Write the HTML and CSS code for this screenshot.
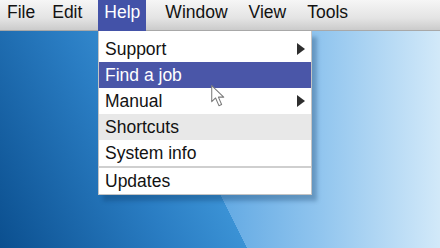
FILE: index.html
```html
<!DOCTYPE html>
<html lang="en">
<head>
  <meta charset="UTF-8" />
  <title>Help menu</title>
  <link rel="stylesheet" href="styles.css">
</head>
<body>
  <header class="menubar">
    <span class="menu-title first">File</span>
    <span class="menu-title">Edit</span>
    <span class="menu-title active">Help</span>
    <span class="menu-title">Window</span>
    <span class="menu-title">View</span>
    <span class="menu-title">Tools</span>
  </header>

  <main class="desktop">
    <ul class="dropdown">
      <li class="item has-sub">Support <span class="arrow"></span></li>
      <li class="item selected">Find a job</li>
      <li class="item has-sub">Manual <span class="arrow"></span></li>
      <li class="item hovered">Shortcuts</li>
      <li class="item">System info</li>
      <li class="separator"></li>
      <li class="item">Updates</li>
    </ul>
  </main>

  <!-- mouse pointer over the menu -->
  <svg class="cursor" viewBox="0 0 16 24" width="17" height="25" xmlns="http://www.w3.org/2000/svg">
    <path d="M1.5 1.5 L1.5 17 L5.2 13.4 L8.4 20.8 L11 19.7 L7.9 12.6 L13 12.6 Z" fill="#ffffff" stroke="#7a7a7a" stroke-width="1" stroke-linejoin="round"/>
  </svg>
</body>
</html>
```

FILE: styles.css
```css
:root {
  --highlight: #4352a8;
  --text: #121212;
  --font: 'Liberation Sans', Arial, sans-serif;
}

* {
  box-sizing: border-box;
  margin: 0;
  padding: 0;
}

html, body {
  width: 440px;
  height: 248px;
  overflow: hidden;
}

body {
  position: relative;
  font-family: var(--font);
  font-size: 17.5px;
  color: var(--text);
  background:
    linear-gradient(63.4deg, #0b4f8f 0%, #2a7dc3 30%, #3b92d5 43.8%, transparent 43.8%),
    linear-gradient(90deg, #5aa2de 0%, #62a9e3 50%, #8fc4ee 72%, #d2e9f9 100%);
}

.menubar {
  display: flex;
  gap: 9px;
  height: 31px;
  padding-left: 1px;
  background: linear-gradient(#f6f6f6, #e4e4e4 60%, #cbcbcb);
  border-bottom: 1px solid #a8a8a8;
}

.menu-title {
  padding: 0 6px;
  height: 31px;
  line-height: 25px;
}

.menu-title.first {
  margin-right: -4px;
}

.menu-title.active {
  margin: 0 4px 0 1px;
  background: var(--highlight);
  color: #ffffff;
}

.desktop {
  padding-left: 98px;
}

.dropdown {
  list-style: none;
  width: 214px;
  padding-top: 5px;
  background: #ffffff;
  border: 1px solid #c4c4c4;
  border-top: none;
  box-shadow: 5px 6px 4px rgba(10, 50, 90, 0.3);
}

.item {
  display: flex;
  align-items: center;
  justify-content: space-between;
  height: 26px;
  line-height: 26px;
  padding: 0 6px 0 6px;
}

.item.selected {
  background: #4a56a8;
  color: #ffffff;
}

.item.hovered {
  background: #e8e8e8;
}

.arrow {
  width: 0;
  height: 0;
  border-left: 8px solid #2e2e2e;
  border-top: 6px solid transparent;
  border-bottom: 6px solid transparent;
}

.separator {
  height: 2px;
  background: #cfcfcf;
}

.cursor {
  position: absolute;
  left: 210px;
  top: 84px;
}
```
